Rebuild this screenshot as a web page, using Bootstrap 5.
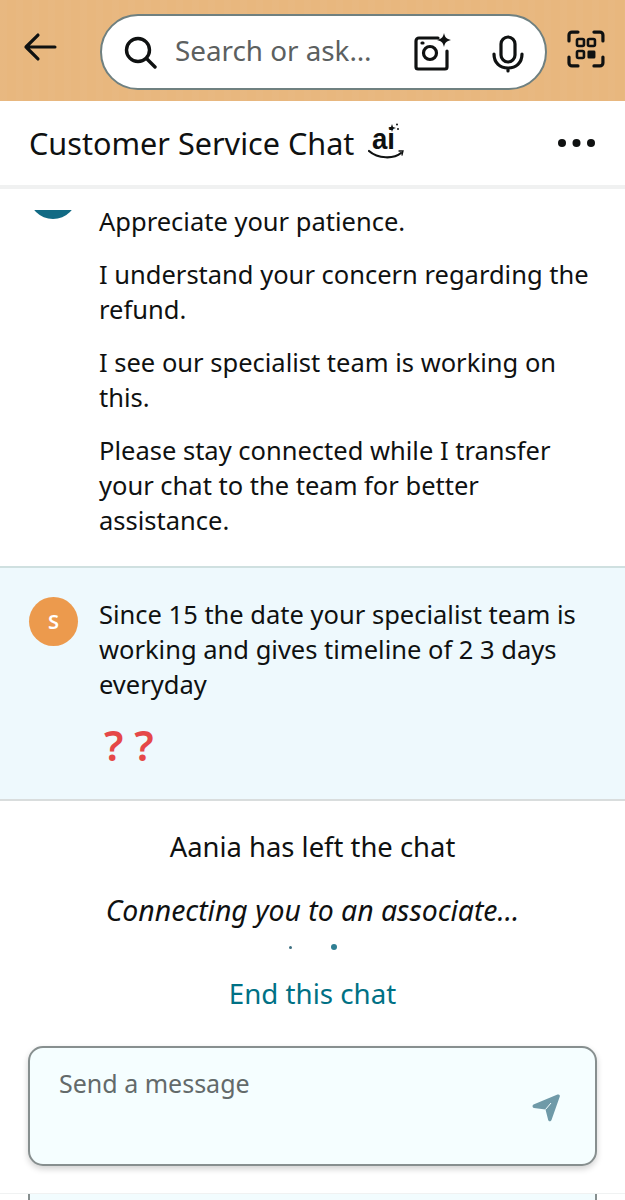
<!DOCTYPE html>
<html lang="en">
<head>
<meta charset="utf-8">
<title>Customer Service Chat</title>
<link rel="stylesheet" href="https://cdn.jsdelivr.net/npm/bootstrap@5.3.0/dist/css/bootstrap.min.css">
<style>
html,body{height:1200px;overflow:hidden}
body{font-family:"Noto Sans","Open Sans",sans-serif;color:#0f1111;background:#fff}
.topbar{height:101px;background:#e8b77e repeating-linear-gradient(90deg,rgba(255,255,255,.018) 0 7px,rgba(0,0,0,0) 7px 16px);padding:14px 20px 0 23px}
.backbtn{width:34px;margin-top:18px}
.searchpill{width:448px;height:76px;margin-left:43px;border:2px solid #6f8080;border-radius:38px;background:#fff;padding-left:22px}
.searchtext{font-size:27.8px;color:#5c6060;margin-left:18px;width:239px;line-height:1;margin-top:-3px;white-space:nowrap}
.qrbtn{margin-left:20px;margin-top:16px}
.titlebar{height:88px;border-bottom:4px solid #f0f1f1;padding:0 29px}
.titletext{font-size:30.6px;line-height:1;margin:0;font-weight:400}
.chatflow{height:1011px;overflow:hidden}
.msgtext{font-size:25.5px;line-height:35px;padding-left:99px;padding-right:30px}
.msgtext p{margin:0 0 18px}
.peekcrop{height:9px;margin-left:33px;width:40px;overflow:hidden;margin-top:21px}
.peekdisc{width:48px;height:48px;border-radius:50%;background:#116a84;margin:-39px 0 0 -4px}
.agentmsg{height:358px;border-bottom:2px solid #cfe0e0}
.usermsg{height:233px;background:#eef9fd;border-bottom:2px solid #d9dddd;padding:29px 30px 0 29px}
.initial{width:49px;height:49px;border-radius:50%;background:#ec9a4d;color:#fff;font-weight:600;font-size:20px;flex:none}
.usertext{font-size:25.5px;line-height:35px;margin-left:21px}
.usertext p{margin:0 0 18px}
.usertext p.qmarks{color:#e54848;font-weight:600;font-size:42px;letter-spacing:11px;padding-left:5px;line-height:42px;margin-top:22px}
.statusline{font-size:27.4px;line-height:35px;text-align:center;margin:28px 0 0}
.connecting{font-size:28.4px;line-height:35px;text-align:center;font-style:italic;margin:29px 0 0}
.typingdots{height:10px;margin-top:14px;padding-left:289px;gap:39px}
.dotsmall{width:3px;height:3px;border-radius:50%;background:#3d6f80}
.dotbig{width:6px;height:6px;border-radius:50%;background:#2f7f93}
.endlink{display:block;text-align:center;font-size:27.7px;line-height:35px;color:#007185;text-decoration:none;margin-top:24px}
.composer{height:120px;margin:35px 28px 0;background:#f5feff;border:2px solid #878f8f;border-radius:15px;box-shadow:0 3px 6px rgba(0,0,0,.18);padding:18px 34px 0 29px}
.composertext{font-size:25px;color:#636a6a;line-height:35px}
.sendicon{margin-top:27px}
.stripwrap{margin-top:27px;height:12px;border-top:1px solid #f0f2f2}
.bottomstrip{height:12px;margin:0 28px;background:#f2fcfe;border-left:2px solid #878f8f;border-right:2px solid #878f8f}
</style>
</head>
<body>
<div class="topbar d-flex align-items-start">
  <svg class="backbtn" width="34" height="30" viewBox="0 0 34 30" fill="none" stroke="#0f1111" stroke-width="3.2" stroke-linecap="round" stroke-linejoin="round"><path d="M32 15H3M15 3L3 15l12 12"/></svg>
  <div class="searchpill d-flex align-items-center">
    <svg width="33" height="33" viewBox="0 0 33 33" fill="none" stroke="#0f1111" stroke-width="3.4" stroke-linecap="round"><circle cx="14" cy="14" r="11.5"/><path d="M22.5 22.5l8.5 8.5"/></svg>
    <div class="searchtext">Search or ask…</div>
    <svg width="38" height="38" viewBox="0 0 38 38" fill="none" stroke="#0f1111" stroke-width="3.2" stroke-linecap="round" stroke-linejoin="round"><path d="M24 5H5a3 3 0 0 0-3 3v26a2 2 0 0 0 2 2h27a2 2 0 0 0 2-2V18"/><circle cx="16" cy="20" r="6.5"/><path d="M8 10h1"/><path d="M30 0c1 4.500 2.500 6 7 7-4.500 1-6 2.500-7 7-1-4.500-2.500-6-7-7 4.500-1 6-2.500 7-7z" fill="#0f1111" stroke="none"/></svg>
    <svg class="ms-auto" style="margin-right:21px;margin-top:3px" width="32" height="38" viewBox="0 0 32 38" fill="none" stroke="#0f1111" stroke-width="3.2" stroke-linecap="round"><rect x="9" y="2" width="14" height="25" rx="7"/><path d="M2 19c0 9 6 14 14 14s14-5 14-14M16 33v3"/></svg>
  </div>
  <svg class="qrbtn" width="38" height="38" viewBox="0 0 38 38" fill="none" stroke="#0f1111" stroke-width="3.200" stroke-linecap="round"><path d="M2 11V5a3 3 0 0 1 3-3h6M27 2h6a3 3 0 0 1 3 3v6M2 27v6a3 3 0 0 0 3 3h6M27 36h6a3 3 0 0 0 3-3v-6"/><rect x="10" y="9" width="7" height="7" rx="1.500" stroke-width="2.600"/><rect x="21" y="9" width="7" height="7" rx="1.500" stroke-width="2.600"/><rect x="10" y="21" width="7" height="7" rx="1.500" stroke-width="2.600"/><rect x="20.500" y="20.500" width="8" height="8" rx="1.500" fill="#0f1111" stroke="none"/></svg>
</div>
<div class="titlebar d-flex align-items-center">
  <h1 class="titletext">Customer Service Chat</h1>
  <svg style="margin-left:14px" width="38" height="40" viewBox="0 0 38 40" fill="none"><text x="4" y="26" font-family="Liberation Sans,sans-serif" font-weight="700" font-size="29" textLength="23" lengthAdjust="spacingAndGlyphs" fill="#0f1111">ai</text><path d="M1 28c9 8 25 8 32 2" stroke="#0f1111" stroke-width="2.200" stroke-linecap="round"/><path d="M31 28l4 0-1 4" stroke="#0f1111" stroke-width="1.300" stroke-linecap="round"/><path d="M24 1l1 3 3 1-3 1-1 3-1-3-3-1 3-1z" fill="#0f1111"/><circle cx="29" cy="1.500" r="1" fill="#0f1111"/><circle cx="30" cy="6" r="1" fill="#0f1111"/></svg>
  <div class="ms-auto d-flex gap-2 me-0" aria-label="More">
    <svg width="39" height="10" viewBox="0 0 39 10" fill="#0f1111"><circle cx="5" cy="5" r="4"/><circle cx="19.500" cy="5" r="4"/><circle cx="34" cy="5" r="4"/></svg>
  </div>
</div>
<div class="chatflow">
  <div class="agentmsg">
    <div class="peekcrop"><div class="peekdisc"></div></div>
    <div class="msgtext" style="margin-top:-15px">
      <p>Appreciate your patience.</p>
      <p>I understand your concern regarding the refund.</p>
      <p>I see our specialist team is working on this.</p>
      <p>Please stay connected while I transfer your chat to the team for better assistance.</p>
    </div>
  </div>
  <div class="usermsg d-flex align-items-start">
    <div class="initial d-flex align-items-center justify-content-center">S</div>
    <div class="usertext">
      <p>Since 15 the date your specialist team is working and gives timeline of 2 3 days everyday</p>
      <p class="qmarks">??</p>
    </div>
  </div>
  <p class="statusline">Aania has left the chat</p>
  <p class="connecting">Connecting you to an associate…</p>
  <div class="typingdots d-flex align-items-center"><span class="dotsmall"></span><span class="dotbig"></span></div>
  <a class="endlink" href="#">End this chat</a>
  <div class="composer d-flex justify-content-between align-items-start">
    <div class="composertext">Send a message</div>
    <svg class="sendicon" width="30" height="30" viewBox="0 0 30 30"><path fill="#6f9aa8" d="M2.500 11.500L26.500 1.600c1.700-.7 2.700.4 2.300 2L20.500 27c-.7 1.800-2.800 1.800-3.300 0L14.500 16.500 3 15c-1.700-.4-2-2.700-.5-3.500z"/><path d="M14.500 16.500l5.500-6.500" stroke="#f5feff" stroke-width="1" fill="none"/></svg>
  </div>
  <div class="stripwrap"><div class="bottomstrip"></div></div>
</div>
</body>
</html>
